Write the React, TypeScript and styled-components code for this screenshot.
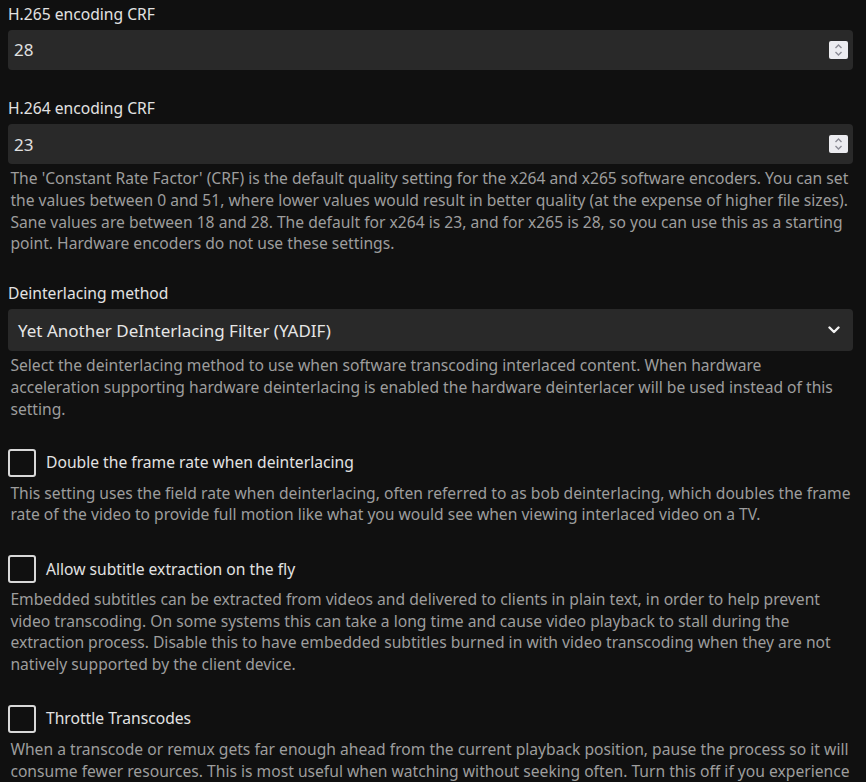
import styled, { createGlobalStyle } from "styled-components";

const GlobalStyle = createGlobalStyle`
    html, body {
        margin: 0;
        background: #101010;
    }
    body {
        font-family: "Noto Sans", "Open Sans", sans-serif;
        font-size: 15.65px;
        line-height: 21.6px;
        color: #e2e2e2;
    }
`;

const Page = styled.div`
    padding: 4px 13px 0 8px;
`;

const FieldGroup = styled.div`
    margin-bottom: 28.5px;
`;

const Label = styled.label`
    display: block;
    margin-bottom: 4.4px;
    color: #e2e2e2;
`;

const NumberField = styled.div`
    display: flex;
    align-items: center;
    height: 40px;
    box-sizing: border-box;
    padding: 0 5px 0 6px;
    background: #292929;
    border-radius: 4px;
    font-size: 17px;
    color: #e0e0e0;
`;

const Value = styled.span`
    flex: 1;
`;

const Spinner = styled.span`
    display: flex;
    align-items: center;
    justify-content: center;
    width: 19px;
    height: 18px;
    background: #ececf0;
    border-radius: 2px;
`;

const Select = styled.div`
    display: flex;
    align-items: center;
    height: 42px;
    box-sizing: border-box;
    padding: 0 13px 0 10px;
    background: #292929;
    border-radius: 4px;
    font-size: 17px;
    color: #e6e6e6;
`;

const Description = styled.div`
    margin-top: 4px;
    padding-left: 2.4px;
    color: #9d9d9d;
`;

const CheckRow = styled.label`
    display: flex;
    align-items: center;
    gap: 10px;
    height: 28px;
    margin-bottom: 6px;
    color: #e2e2e2;
`;

const CheckBox = styled.span`
    width: 28px;
    height: 28px;
    box-sizing: border-box;
    border: 2px solid #d8d8d8;
    border-radius: 3px;
`;

const CheckGroup = styled.div`
    margin-bottom: 29.5px;
`;

const SpinIcon = () => (
    <svg width="11" height="14" viewBox="0 0 11 14" fill="none" stroke="#8c8c96" strokeWidth="1.4">
        <polyline points="2.5,5 5.5,2 8.5,5" />
        <polyline points="2.5,9 5.5,12 8.5,9" />
    </svg>
);

const Chevron = () => (
    <svg width="12" height="8" viewBox="0 0 12 8" fill="none" stroke="#f2f2f2" strokeWidth="2.4" strokeLinecap="round" strokeLinejoin="round">
        <polyline points="1.5,1.5 6,6 10.5,1.5" />
    </svg>
);

const checks = [
    {
        label: "Double the frame rate when deinterlacing",
        text: "This setting uses the field rate when deinterlacing, often referred to as bob deinterlacing, which doubles the frame rate of the video to provide full motion like what you would see when viewing interlaced video on a TV.",
    },
    {
        label: "Allow subtitle extraction on the fly",
        text: "Embedded subtitles can be extracted from videos and delivered to clients in plain text, in order to help prevent video transcoding. On some systems this can take a long time and cause video playback to stall during the extraction process. Disable this to have embedded subtitles burned in with video transcoding when they are not natively supported by the client device.",
    },
    {
        label: "Throttle Transcodes",
        text: "When a transcode or remux gets far enough ahead from the current playback position, pause the process so it will consume fewer resources. This is most useful when watching without seeking often. Turn this off if you experience playback issues.",
    },
];

const App = () => {
    return (
        <>
            <GlobalStyle />
            <Page>
                <FieldGroup>
                    <Label>H.265 encoding CRF</Label>
                    <NumberField>
                        <Value>28</Value>
                        <Spinner><SpinIcon /></Spinner>
                    </NumberField>
                </FieldGroup>
                <FieldGroup>
                    <Label>H.264 encoding CRF</Label>
                    <NumberField>
                        <Value>23</Value>
                        <Spinner><SpinIcon /></Spinner>
                    </NumberField>
                    <Description>
                        The 'Constant Rate Factor' (CRF) is the default quality setting for the x264 and x265 software encoders. You can set the values between 0 and 51, where lower values would result in better quality (at the expense of higher file sizes). Sane values are between 18 and 28. The default for x264 is 23, and for x265 is 28, so you can use this as a starting point. Hardware encoders do not use these settings.
                    </Description>
                </FieldGroup>
                <FieldGroup>
                    <Label>Deinterlacing method</Label>
                    <Select>
                        <Value>Yet Another DeInterlacing Filter (YADIF)</Value>
                        <Chevron />
                    </Select>
                    <Description>
                        Select the deinterlacing method to use when software transcoding interlaced content. When hardware acceleration supporting hardware deinterlacing is enabled the hardware deinterlacer will be used instead of this setting.
                    </Description>
                </FieldGroup>
                {checks.map((c) => (
                    <CheckGroup key={c.label}>
                        <CheckRow>
                            <CheckBox />
                            {c.label}
                        </CheckRow>
                        <Description>{c.text}</Description>
                    </CheckGroup>
                ))}
            </Page>
        </>
    );
};

export default App;
